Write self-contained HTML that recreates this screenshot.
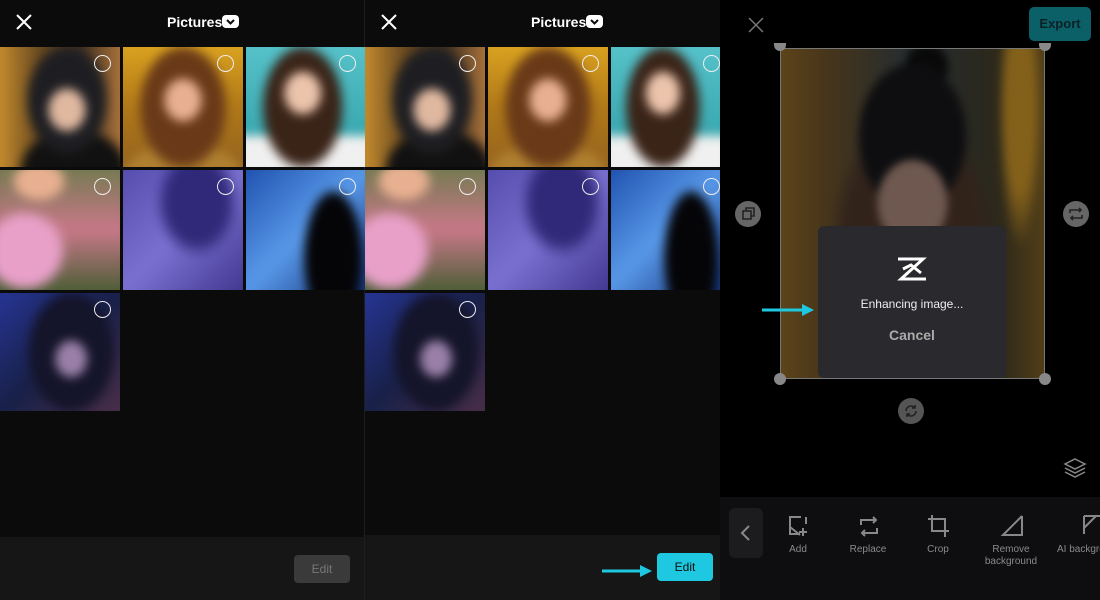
<!DOCTYPE html><html><head><style>
*{margin:0;padding:0;box-sizing:border-box}
body{width:1100px;height:600px;background:#0b0b0b;font-family:"Liberation Sans",sans-serif;position:relative;overflow:hidden}
.a{position:absolute}
.t{position:absolute;width:120px;height:120px;overflow:hidden}
.t i{position:absolute;inset:-10px;filter:blur(5px)}
.c{position:absolute;width:17px;height:17px;border:1.5px solid #eee;border-radius:50%}
.hdr{color:#fff;font-weight:bold;font-size:14px}
.lbl{color:#8a8a8a;font-size:10px;text-align:center;position:absolute}
.p1{background:radial-gradient(ellipse 14% 16% at 55% 52%,#e0b8a0 0 90%,transparent 100%),radial-gradient(ellipse 30% 40% at 55% 45%,#1e1e22 0 90%,transparent 100%),radial-gradient(ellipse 40% 30% at 60% 95%,#111 0 90%,transparent 100%),linear-gradient(90deg,#d89a30,#6a4a20 35%,#403020 65%,#c08040)}
.p2{background:radial-gradient(ellipse 14% 16% at 50% 45%,#e8b090 0 90%,transparent 100%),radial-gradient(ellipse 32% 45% at 50% 50%,#6a3a18 0 90%,transparent 100%),radial-gradient(ellipse 45% 25% at 50% 100%,#b08030 0 90%,transparent 100%),linear-gradient(#e0a820,#b07818 50%,#906020)}
.p3{background:radial-gradient(ellipse 14% 16% at 48% 40%,#ecc4ac 0 90%,transparent 100%),radial-gradient(ellipse 30% 45% at 48% 50%,#3a2418 0 90%,transparent 100%),linear-gradient(#58c4cc,#3aa8b0 70%,#f0f0f0 71%)}
.p4{background:radial-gradient(ellipse 30% 30% at 25% 65%,#e8a0c8 0 80%,transparent 100%),radial-gradient(ellipse 20% 15% at 35% 15%,#e8b090 0 80%,transparent 100%),linear-gradient(#6a7a4a,#c87888 50%,#3a5a2a)}
.p5{background:radial-gradient(ellipse 30% 40% at 60% 30%,#302878 0 70%,transparent 100%),linear-gradient(135deg,#5048a8,#7a70d0 50%,#3a3088)}
.p6{background:radial-gradient(ellipse 22% 50% at 70% 70%,#050508 0 90%,transparent 100%),linear-gradient(135deg,#1848a8,#5898e8 50%,#0c2870)}
.p7{background:radial-gradient(ellipse 12% 14% at 58% 55%,#9a80a8 0 90%,transparent 100%),radial-gradient(ellipse 32% 45% at 58% 50%,#14142a 0 90%,transparent 100%),linear-gradient(135deg,#2838a0,#182048 50%,#503048)}
</style></head><body>
<div class="a" style="left:0;top:537px;width:365px;height:63px;background:#161616"></div>
<div class="a" style="left:365px;top:535px;width:355px;height:65px;background:#161616"></div>
<div class="a" style="left:364px;top:0;width:1px;height:600px;background:#1e1e1e"></div>

<svg class="a" style="left:15px;top:13px" width="18" height="18"><path d="M2 2L16 16M16 2L2 16" stroke="#fff" stroke-width="2"/></svg>
<div class="a hdr" style="left:167px;top:14px">Pictures</div>
<div class="a" style="left:222px;top:15px;width:17px;height:13px;background:#fff;border-radius:4px"><svg width="17" height="13"><path d="M5 5L8.5 8.5L12 5" stroke="#0b0b0b" stroke-width="2" fill="none"/></svg></div>

<svg class="a" style="left:380px;top:13px" width="18" height="18"><path d="M2 2L16 16M16 2L2 16" stroke="#fff" stroke-width="2"/></svg>
<div class="a hdr" style="left:531px;top:14px">Pictures</div>
<div class="a" style="left:586px;top:15px;width:17px;height:13px;background:#fff;border-radius:4px"><svg width="17" height="13"><path d="M5 5L8.5 8.5L12 5" stroke="#0b0b0b" stroke-width="2" fill="none"/></svg></div>

<div class="t" style="left:0;top:47px"><i class="p1"></i></div>
<div class="t" style="left:123px;top:47px"><i class="p2"></i></div>
<div class="t" style="left:246px;top:47px;width:119px"><i class="p3"></i></div>
<div class="t" style="left:0;top:170px"><i class="p4"></i></div>
<div class="t" style="left:123px;top:170px"><i class="p5"></i></div>
<div class="t" style="left:246px;top:170px;width:119px"><i class="p6"></i></div>
<div class="t" style="left:0;top:293px;height:118px"><i class="p7"></i></div>
<div class="c" style="left:94px;top:55px"></div><div class="c" style="left:217px;top:55px"></div><div class="c" style="left:339px;top:55px"></div>
<div class="c" style="left:94px;top:178px"></div><div class="c" style="left:217px;top:178px"></div><div class="c" style="left:339px;top:178px"></div>
<div class="c" style="left:94px;top:301px"></div>

<div class="t" style="left:365px;top:47px"><i class="p1"></i></div>
<div class="t" style="left:488px;top:47px"><i class="p2"></i></div>
<div class="t" style="left:611px;top:47px;width:109px"><i class="p3"></i></div>
<div class="t" style="left:365px;top:170px"><i class="p4"></i></div>
<div class="t" style="left:488px;top:170px"><i class="p5"></i></div>
<div class="t" style="left:611px;top:170px;width:109px"><i class="p6"></i></div>
<div class="t" style="left:365px;top:293px;height:118px"><i class="p7"></i></div>
<div class="c" style="left:459px;top:55px"></div><div class="c" style="left:582px;top:55px"></div><div class="c" style="left:703px;top:55px"></div>
<div class="c" style="left:459px;top:178px"></div><div class="c" style="left:582px;top:178px"></div><div class="c" style="left:703px;top:178px"></div>
<div class="c" style="left:459px;top:301px"></div>

<div class="a" style="left:294px;top:555px;width:56px;height:28px;background:#3a3a3a;border-radius:4px;color:#777;font-size:12px;text-align:center;line-height:28px">Edit</div>
<div class="a" style="left:657px;top:553px;width:56px;height:28px;background:#1ec8e0;border-radius:4px;color:#0b0b0b;font-size:12px;text-align:center;line-height:28px">Edit</div>
<svg class="a" style="left:600px;top:563px" width="54" height="16"><path d="M2 8H42" stroke="#1ec8e0" stroke-width="3"/><path d="M40 2L52 8L40 14Z" fill="#1ec8e0"/></svg>

<!-- right panel -->
<div class="a" style="left:720px;top:0;width:380px;height:497px;background:#000"></div>
<svg class="a" style="left:747px;top:16px" width="18" height="18"><path d="M2 2L16 16M16 2L2 16" stroke="#777" stroke-width="1.5"/></svg>
<div class="a" style="left:1029px;top:7px;width:62px;height:34px;background:#0b5f66;border-radius:5px;color:#0a2226;font-weight:bold;font-size:13px;text-align:center;line-height:34px">Export</div>
<div class="a" style="left:780px;top:48px;width:265px;height:331px;border:1px solid #777;overflow:hidden"><i class="a" style="inset:-10px;filter:blur(4px) brightness(0.55);background:radial-gradient(ellipse 13% 13% at 50% 47%,#c8a090 0 90%,transparent 100%),radial-gradient(ellipse 20% 22% at 50% 28%,#1a1a1e 0 90%,transparent 100%),radial-gradient(ellipse 8% 7% at 55% 8%,#111 0 90%,transparent 100%),radial-gradient(ellipse 30% 40% at 50% 60%,#5a4030 0 80%,transparent 100%),radial-gradient(ellipse 8% 40% at 88% 20%,#f0b030 0 60%,transparent 100%),linear-gradient(90deg,#b08030,#806030 20%,#405058 50%,#504830 80%,#a07828)"></i></div>
<div class="a" style="left:818px;top:226px;width:188px;height:152px;background:#2a2a2e;border-radius:6px"></div>
<svg class="a" style="left:895px;top:255px" width="34" height="28"><path d="M3 4H28L6 24H31M8 14L16 10L26 18" stroke="#fff" stroke-width="3" fill="none"/></svg>
<div class="a" style="left:818px;top:297px;width:188px;text-align:center;color:#eee;font-size:12px">Enhancing image...</div>
<div class="a" style="left:818px;top:327px;width:188px;text-align:center;color:#aaa;font-size:14px;font-weight:bold">Cancel</div>
<svg class="a" style="left:760px;top:302px" width="56" height="16"><path d="M2 8H44" stroke="#1ec8e0" stroke-width="3"/><path d="M42 2L54 8L42 14Z" fill="#1ec8e0"/></svg>
<div class="a" style="left:774px;top:373px;width:12px;height:12px;border-radius:50%;background:#888"></div>
<div class="a" style="left:1039px;top:373px;width:12px;height:12px;border-radius:50%;background:#888"></div>
<div class="a" style="left:774px;top:43px;width:12px;height:8px;border-radius:0 0 6px 6px;background:#888"></div>
<div class="a" style="left:1039px;top:43px;width:12px;height:8px;border-radius:0 0 6px 6px;background:#888"></div>
<div class="a" style="left:735px;top:201px;width:26px;height:26px;border-radius:50%;background:#666"><svg width="26" height="26"><rect x="8" y="10" width="8" height="8" stroke="#222" stroke-width="1.6" fill="none"/><path d="M11 10V7H19V15H16" stroke="#222" stroke-width="1.6" fill="none"/></svg></div>
<div class="a" style="left:1063px;top:201px;width:26px;height:26px;border-radius:50%;background:#666"><svg width="26" height="26"><path d="M7 12V9H18M16 7L18 9L16 11M19 14V17H8M10 15L8 17L10 19" stroke="#222" stroke-width="1.6" fill="none"/></svg></div>
<div class="a" style="left:898px;top:398px;width:26px;height:26px;border-radius:50%;background:#555"><svg width="26" height="26"><path d="M8 13A5 5 0 0 1 17 10M18 13A5 5 0 0 1 9 16M17 7V10H14M9 19V16H12" stroke="#222" stroke-width="1.6" fill="none"/></svg></div>
<svg class="a" style="left:1063px;top:456px" width="24" height="24"><path d="M12 3L22 8L12 13L2 8Z M2 12L12 17L22 12 M2 16L12 21L22 16" stroke="#888" stroke-width="1.5" fill="none"/></svg>

<div class="a" style="left:720px;top:497px;width:380px;height:103px;background:#0e0e10"></div>
<div class="a" style="left:729px;top:508px;width:34px;height:50px;background:#1c1c1e;border-radius:6px"></div>
<svg class="a" style="left:738px;top:524px" width="16" height="18"><path d="M11 2L4 9L11 16" stroke="#888" stroke-width="2" fill="none"/></svg>
<svg class="a" style="left:787px;top:514px" width="24" height="24"><path d="M14 3H3V20H13M3 13L13 21M19 3V10M16 14V22M12 18H20" stroke="#888" stroke-width="2" fill="none"/></svg>
<svg class="a" style="left:857px;top:515px" width="24" height="24"><path d="M4 10V5H19M16 2L19 5L16 8M20 13V18H5M8 15L5 18L8 21" stroke="#888" stroke-width="2" fill="none"/></svg>
<svg class="a" style="left:927px;top:514px" width="24" height="24"><path d="M5 1V17H22M1 5H18V23" stroke="#888" stroke-width="2" fill="none"/></svg>
<svg class="a" style="left:1000px;top:514px" width="24" height="24"><path d="M22 2V21H3L22 2" stroke="#888" stroke-width="2" fill="none"/></svg>
<svg class="a" style="left:1082px;top:514px" width="18" height="24"><path d="M2 2H18M2 2V20M2 14L14 2" stroke="#888" stroke-width="2" fill="none"/></svg>
<div class="lbl" style="left:778px;top:544px;width:40px">Add</div>
<div class="lbl" style="left:843px;top:544px;width:50px">Replace</div>
<div class="lbl" style="left:918px;top:544px;width:40px">Crop</div>
<div class="lbl" style="left:976px;top:544px;width:70px;line-height:12px">Remove<br>background</div>
<div class="lbl" style="left:1057px;top:544px;width:80px;text-align:left">AI background</div>
</body></html>
